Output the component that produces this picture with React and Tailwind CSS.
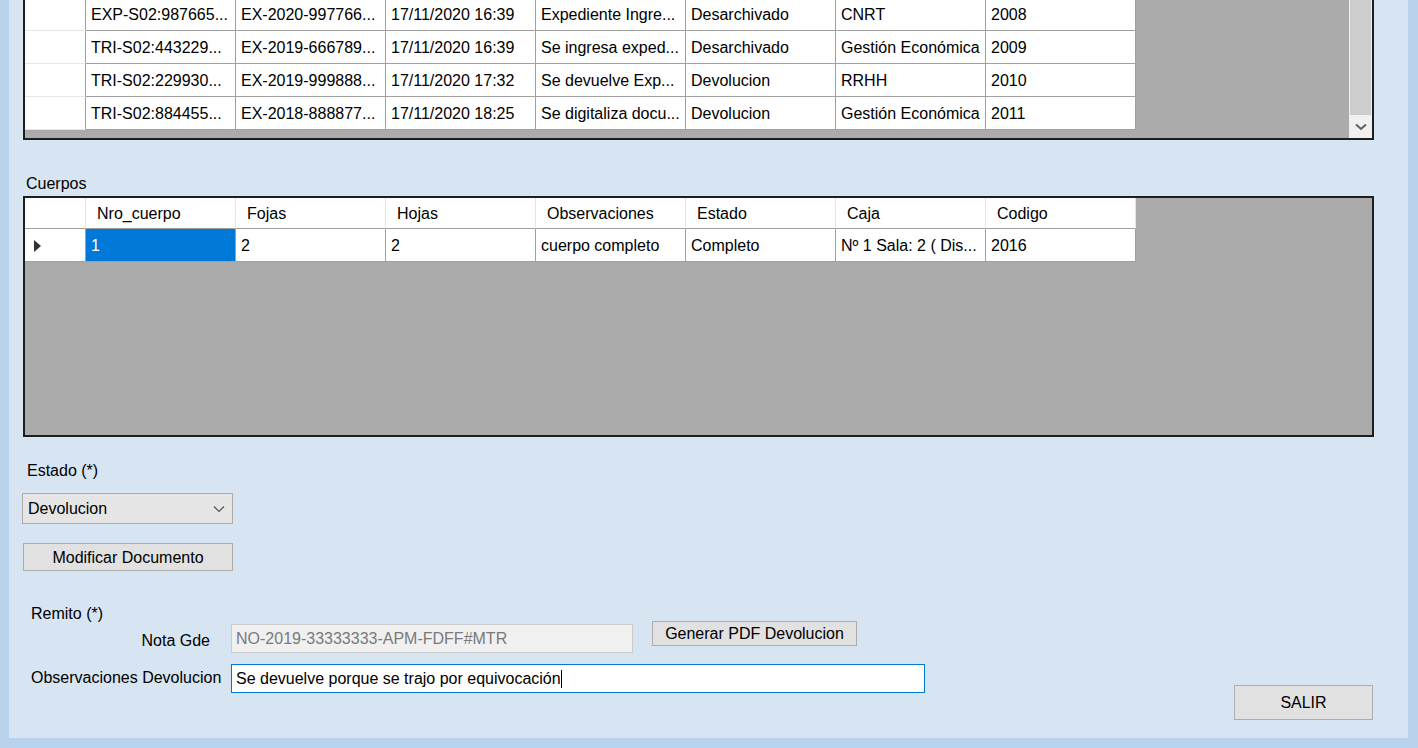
import React from 'react'

const topRows = [
  ['EXP-S02:987665...', 'EX-2020-997766...', '17/11/2020 16:39', 'Expediente Ingre...', 'Desarchivado', 'CNRT', '2008'],
  ['TRI-S02:443229...', 'EX-2019-666789...', '17/11/2020 16:39', 'Se ingresa exped...', 'Desarchivado', 'Gestión Económica', '2009'],
  ['TRI-S02:229930...', 'EX-2019-999888...', '17/11/2020 17:32', 'Se devuelve Exp...', 'Devolucion', 'RRHH', '2010'],
  ['TRI-S02:884455...', 'EX-2018-888877...', '17/11/2020 18:25', 'Se digitaliza docu...', 'Devolucion', 'Gestión Económica', '2011'],
]

const cuerposHeader = ['Nro_cuerpo', 'Fojas', 'Hojas', 'Observaciones', 'Estado', 'Caja', 'Codigo']
const cuerposRow = ['1', '2', '2', 'cuerpo completo', 'Completo', 'Nº 1 Sala: 2 ( Dis...', '2016']

// top grid: scrolled list of movimientos, first row partly hidden above
function TopGrid() {
  return (
    <div className="h-[140px] flex border-x-2 border-b-2 border-[#1e1e1e] bg-[#ababab] overflow-hidden">
      <div className="flex-1 -mt-[2px]">
        {topRows.map((row, i) => (
          <div key={i} className="flex h-[33px]">
            <div className="w-[61px] h-full bg-white border-r border-b border-r-[#a0a0a0] border-b-[#e6e6e6]" />
            {row.map((cell, j) => (
              <div
                key={j}
                className="w-[150px] h-full bg-white border-r border-b border-[#a0a0a0] flex items-center pl-[5px] pt-[2px] whitespace-nowrap overflow-hidden"
              >
                {cell}
              </div>
            ))}
          </div>
        ))}
      </div>
      <div className="w-[23px] flex flex-col bg-[#f0f0f0]">
        <div className="h-[115px] mx-[1px] bg-[#cdcdcd]" />
        <div className="flex-1 flex items-center justify-center">
          <svg width="12" height="8" viewBox="0 0 12 8">
            <polyline points="1,1.5 6,6 11,1.5" fill="none" stroke="#606060" strokeWidth="2" />
          </svg>
        </div>
      </div>
    </div>
  )
}

function CuerposGrid() {
  return (
    <div className="h-[241px] border-2 border-[#1e1e1e] bg-[#ababab]">
      <div className="flex h-[31px]">
        <div className="w-[61px] h-full bg-white border-r border-b border-r-[#e3e3e3] border-b-[#a0a0a0]" />
        {cuerposHeader.map((h, j) => (
          <div
            key={j}
            className="w-[150px] h-full bg-white border-r border-b border-r-[#e3e3e3] border-b-[#a0a0a0] flex items-center pl-[11px] pt-[2px]"
          >
            {h}
          </div>
        ))}
      </div>
      <div className="flex h-[33px]">
        <div className="w-[61px] h-full bg-white border-r border-b border-[#a0a0a0] flex items-center pl-[9px] pt-[2px]">
          <svg width="8" height="12" viewBox="0 0 8 12">
            <polygon points="0,0 7,6 0,12" fill="#333" />
          </svg>
        </div>
        {cuerposRow.map((c, j) => (
          <div
            key={j}
            className={
              j === 0
                ? 'w-[150px] h-full bg-[#0078d7] text-white border-r border-b border-[#a0a0a0] flex items-center pl-[5px] pt-[2px]'
                : 'w-[150px] h-full bg-white border-r border-b border-[#a0a0a0] flex items-center pl-[5px] pt-[2px] whitespace-nowrap overflow-hidden'
            }
          >
            {c}
          </div>
        ))}
      </div>
    </div>
  )
}

export default function App() {
  return (
    <div className="w-[1418px] h-[748px] bg-[#bad2ec] pl-[9px] pr-[10px] pb-[10px] font-['Liberation_Sans',Arial,sans-serif] text-[16px] text-black overflow-hidden">
      <div className="h-full bg-[#d7e4f2] flex flex-col pl-[14px] pr-[34px]">
        <TopGrid />

        <div className="mt-[35px] h-[17px] leading-[18px] ml-[3px]">Cuerpos</div>
        <div className="mt-[4px]">
          <CuerposGrid />
        </div>

        <div className="mt-[25px] h-[17px] leading-[18px] ml-[4px]">Estado (*)</div>
        <div className="mt-[14px] -ml-[1px] w-[211px] h-[31px] bg-[#e5e5e5] border border-[#acacac] flex items-center justify-between pl-[5px] pr-[7px] pt-[1px]">
          <span>Devolucion</span>
          <svg width="12" height="8" viewBox="0 0 12 8">
            <polyline points="1,1.5 6,6.5 11,1.5" fill="none" stroke="#505050" strokeWidth="1.2" />
          </svg>
        </div>

        <button className="mt-[19px] w-[210px] h-[28px] bg-[#e1e1e1] border border-[#adadad] flex items-center justify-center pt-[1px]">
          Modificar Documento
        </button>

        <div className="mt-[34px] h-[16px] leading-[18px] ml-[8px]">Remito (*)</div>

        <div className="flex items-start">
          <div className="w-[208px] pt-[11px] pr-[21px] text-right leading-[18px]">Nota Gde</div>
          <div className="mt-[3px] w-[402px] h-[29px] bg-[#f0f0f0] border border-[#cccccc] flex items-center pl-[4px] pt-[1px] text-[#7a7a7a] whitespace-nowrap">
            NO-2019-33333333-APM-FDFF#MTR
          </div>
          <button className="ml-[19px] w-[205px] h-[25px] bg-[#e1e1e1] border border-[#adadad] flex items-center justify-center pt-[1px]">
            Generar PDF Devolucion
          </button>
        </div>

        <div className="mt-[11px] flex items-start">
          <div className="w-[208px] pt-[5px] pl-[8px] leading-[18px] whitespace-nowrap">Observaciones Devolucion</div>
          <div className="w-[694px] h-[29px] bg-white border border-[#0078d7] flex items-center pl-[4px] pt-[1px] whitespace-nowrap">
            <span>Se devuelve porque se trajo por equivocación</span>
            <span className="w-px h-[18px] bg-black" />
          </div>
          <button className="ml-auto mr-[1px] mt-[21px] w-[139px] h-[35px] bg-[#e1e1e1] border border-[#adadad] flex items-center justify-center pt-[1px]">
            SALIR
          </button>
        </div>
      </div>
    </div>
  )
}
